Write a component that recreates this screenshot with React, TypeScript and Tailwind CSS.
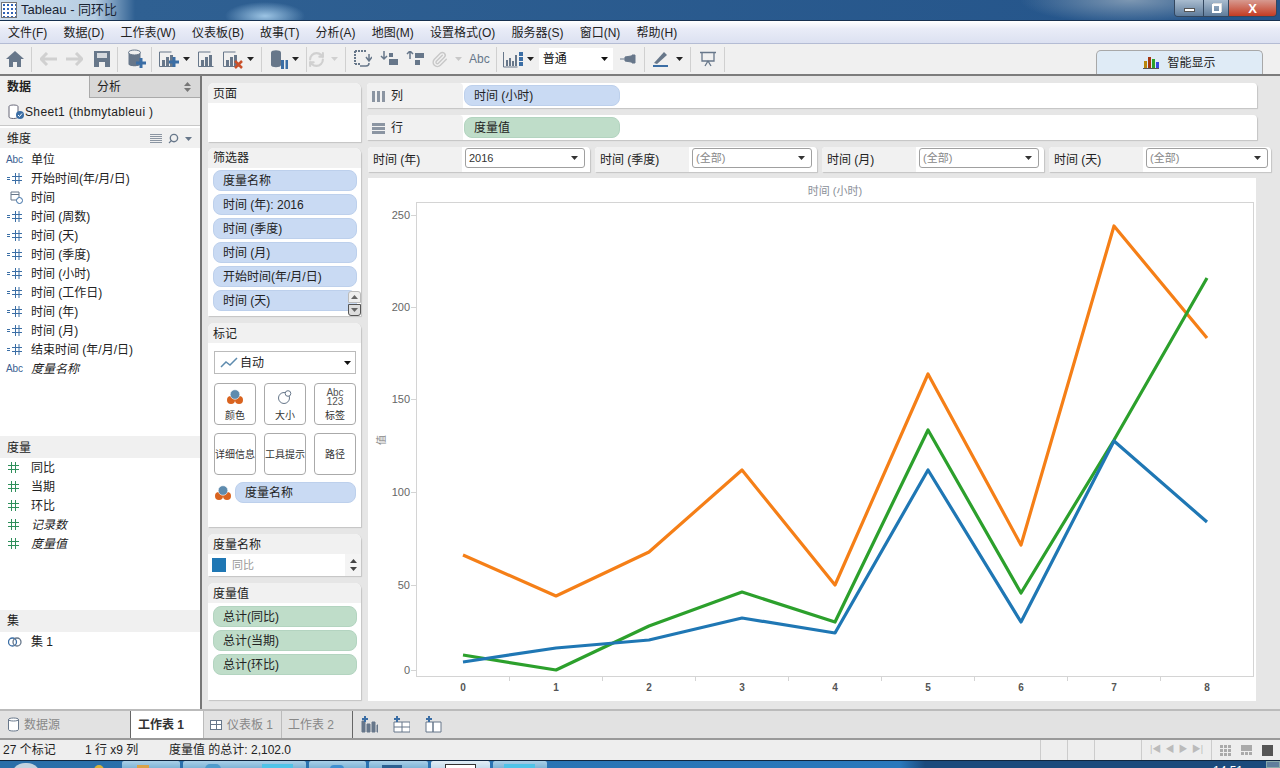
import React from "react";
import { Paperclip, RefreshCw, Search } from "lucide-react";

const font = "font-['Liberation_Sans','Noto_Sans_CJK_SC',sans-serif]";
const slate = "#67778a";
const accent = "#3b6ea5";

const Caret = ({ className = "" }: { className?: string }) => (
  <svg width="7" height="4" viewBox="0 0 7 4" className={`shrink-0 ${className}`}>
    <path d="M0 0h7L3.5 4z" fill="currentColor" />
  </svg>
);

const Sep = ({ ml }: { ml: string }) => <div className={`h-[25px] w-px shrink-0 bg-[#d0d0d0] ${ml}`} />;

// small bar chart used by the toolbar buttons, extra marks go on top
const Bars = ({ children }: { children?: React.ReactNode }) => (
  <svg width="20" height="20" viewBox="0 0 20 20" className="shrink-0">
    <path d="M.5 3v14.500h15M.5 3h12" fill="none" stroke={slate} />
    <path d="M3 11h3v6H3zM7 8h3v9H7zM11 6h3v11h-3z" fill={slate} />
    {children}
  </svg>
);

const HashIcon = () => (
  <svg width="15" height="11" viewBox="0 0 15 11" className="text-[#3b6ea5]">
    <path d="M0 4.500h3M0 6.500h3M5 3.500h10M5 7.500h10M8.500 0v11M12 0v11" stroke="currentColor" fill="none" />
  </svg>
);

const GreenHash = () => (
  <svg width="11" height="11" viewBox="0 0 11 11" className="-ml-[2px] text-[#2f8f5b]">
    <path d="M0 3.500h11M0 7.500h11M3.500 0v11M7.500 0v11" stroke="currentColor" fill="none" />
  </svg>
);

const AbcTag = () => <span className="text-[10px] leading-none text-[#3b5f92]">Abc</span>;

const ColorDots = () => (
  <svg width="16" height="16" viewBox="0 0 16 16">
    <circle cx="4" cy="11" r="4" fill="#d9631f" />
    <circle cx="12" cy="11" r="4" fill="#d9631f" />
    <circle cx="8" cy="5.500" r="4.800" fill="#5e8bae" stroke="#fff" strokeWidth=".6" />
  </svg>
);

const Row = ({ icon, label, italic }: { icon: React.ReactNode; label: string; italic?: boolean }) => (
  <div className="flex h-[19px] items-center text-[12px] text-[#222]">
    <div className="flex w-[31px] shrink-0 justify-center pr-[6px] pl-[4px]">{icon}</div>
    <span className={italic ? "italic" : ""}>{label}</span>
  </div>
);

const PanelHead = ({ label, className = "pt-px" }: { label: string; className?: string }) => (
  <div className={`flex h-[20px] items-center rounded-t-[6px] bg-[#f1f1f1] pl-[5px] text-[12px] text-[#222] ${className}`}>{label}</div>
);

const Pill = ({ label, green, className = "" }: { label: string; green?: boolean; className?: string }) => (
  <div
    className={`flex h-[21px] shrink-0 items-center rounded-[8px] border pl-[9px] text-[12px] text-[#222] ${
      green ? "border-[#b3d4c0] bg-[#bfddc9]" : "border-[#bdd0ec] bg-[#c9daf3]"
    } ${className}`}
  >
    {label}
  </div>
);

const Card = ({ className = "", children }: { className?: string; children: React.ReactNode }) => (
  <div className={`shrink-0 rounded-t-[6px] bg-white shadow-[1px_1px_1px_#c4c4c4] ${className}`}>{children}</div>
);

const MarkButton = ({ label, icon }: { label: string; icon?: React.ReactNode }) => (
  <div className="flex h-[42px] w-[42px] flex-col items-center justify-center rounded-[4px] border border-[#aaa] bg-white pt-[2px] text-[10px] leading-[12px] whitespace-nowrap text-[#333]">
    {icon && <div className="mb-[4px] flex h-[17px] items-center">{icon}</div>}
    {label}
  </div>
);

const Shelf = ({ label, pill, green, icon, mt }: { label: string; pill: string; green?: boolean; icon: React.ReactNode; mt: string }) => (
  <div className={`flex h-[25px] w-[890px] shrink-0 rounded-t-[4px] bg-white shadow-[1px_1px_1px_#c4c4c4] ${mt}`}>
    <div className="flex w-[96px] items-center gap-[6px] rounded-t-[4px] bg-[#f1f1f1] pt-px pl-[5px] text-[12px] text-[#222]">
      {icon}
      {label}
    </div>
    <Pill label={pill} green={green} className="mt-[2px] ml-[1px] w-[156px] pt-px" />
  </div>
);

const FilterCard = ({ label, value, muted, selectW }: { label: string; value: string; muted?: boolean; selectW: string }) => (
  <div className="flex h-[25px] w-[222px] shrink-0 rounded-t-[4px] bg-white shadow-[1px_1px_1px_#c4c4c4]">
    <div className="flex w-[94px] items-center rounded-tl-[4px] bg-[#f1f1f1] pl-[5px] text-[12px] text-[#222]">{label}</div>
    <div
      className={`mt-[1px] ml-[3px] flex h-[20px] items-center justify-between rounded-[3px] border border-[#a0a0a0] pr-[6px] pl-[3px] text-[11px] ${selectW} ${
        muted ? "text-[#888]" : "text-[#333]"
      }`}
    >
      {value}
      <Caret className="text-[#333]" />
    </div>
  </div>
);

const blue = "463,662 556,648 649,640 742,618 835,633 928,470 1021,622 1114,441 1207,522";
const orange = "463,555 556,596 649,552 742,470 835,585 928,374 1021,545 1114,226 1207,338";
const green = "463,655 556,670 649,626 742,592 835,622 928,430 1021,593 1114,440 1207,278";

const Chart = () => (
  <svg width="888" height="523" viewBox="368 178 888 523" className="block">
    <rect x="416.500" y="202.500" width="837" height="474" fill="none" stroke="#d4d4d4" />
    {[
      [215, "250"],
      [307, "200"],
      [399, "150"],
      [492, "100"],
      [585, "50"],
      [670, "0"],
    ].map(([y, t]) => (
      <g key={t}>
        <path d={`M411 ${y}.5h5`} stroke="#d4d4d4" />
        <text x="410" y={Number(y) + 4} textAnchor="end" fontSize="11" fill="#666" fontFamily="Liberation Sans">
          {t}
        </text>
      </g>
    ))}
    {[509, 602, 695, 788, 881, 974, 1067, 1160].map((x) => (
      <path key={x} d={`M${x}.5 676v5`} stroke="#d4d4d4" />
    ))}
    {[463, 556, 649, 742, 835, 928, 1021, 1114, 1207].map((x, i) => (
      <text key={x} x={x} y="691" textAnchor="middle" fontSize="10" fontWeight="bold" fill="#555" fontFamily="Liberation Sans">
        {i}
      </text>
    ))}
    <text x="835" y="195" textAnchor="middle" fontSize="11" fill="#8a8f99" fontFamily="Liberation Sans, Noto Sans CJK SC">
      时间 (小时)
    </text>
    <text transform="translate(385 440) rotate(-90)" textAnchor="middle" fontSize="10" fill="#888" fontFamily="Noto Sans CJK SC">
      值
    </text>
    <polyline points={orange} fill="none" stroke="#f57f17" strokeWidth="3.200" strokeLinejoin="round" />
    <polyline points={green} fill="none" stroke="#2ca02c" strokeWidth="3.200" strokeLinejoin="round" />
    <polyline points={blue} fill="none" stroke="#1f77b4" strokeWidth="3.200" strokeLinejoin="round" />
  </svg>
);

const menus = ["文件(F)", "数据(D)", "工作表(W)", "仪表板(B)", "故事(T)", "分析(A)", "地图(M)", "设置格式(O)", "服务器(S)", "窗口(N)", "帮助(H)"];
const dims = ["开始时间(年/月/日)", "时间", "时间 (周数)", "时间 (天)", "时间 (季度)", "时间 (小时)", "时间 (工作日)", "时间 (年)", "时间 (月)", "结束时间 (年/月/日)"];

export default function App() {
  return (
    <div className={`flex h-[768px] w-[1280px] flex-col overflow-hidden bg-[#e6e6e6] ${font}`}>
      {/* title bar */}
      <div className="flex h-[21px] shrink-0 items-start justify-between border-b border-[#16304f] bg-[radial-gradient(ellipse_40px_14px_at_265px_16px,#9cc4e4,transparent),radial-gradient(ellipse_110px_24px_at_1130px_0,#7d97b2,transparent),linear-gradient(90deg,#cfdeec_0,#b6cde2_95px,#2f6092_135px,#24548a_100%)]">
        <div className="flex items-center gap-[4px] pt-[1px] pl-[1px] text-[13px] leading-[18px] text-[#1a2433]">
          <div className="h-[16px] w-[16px] border border-[#777] bg-white bg-[radial-gradient(#2f62b5_1px,transparent_1.5px)] bg-[length:4px_4px]" />
          Tableau - 同环比
        </div>
        <div className="mr-[3px] flex h-[17px] overflow-hidden rounded-b-[4px] border border-t-0 border-[#33475f] text-white">
          <div className="flex w-[28px] items-end justify-center bg-[linear-gradient(#a9bccf,#5f7c9b)] pb-[4px]">
            <div className="h-[4px] w-[11px] border border-[#555] bg-white" />
          </div>
          <div className="flex w-[26px] items-center justify-center border-x border-[#33475f] bg-[linear-gradient(#a9bccf,#5f7c9b)]">
            <div className="h-[9px] w-[9px] border-2 border-white shadow-[1px_-1px_0_#ddd]" />
          </div>
          <div className="flex w-[47px] items-center justify-center bg-[linear-gradient(#d79a90,#c43b22)] text-[13px] leading-none font-bold">X</div>
        </div>
      </div>

      {/* menu */}
      <div className="flex h-[23px] shrink-0 items-center gap-[16.2px] border-b border-[#b4bcd4] bg-[linear-gradient(#ffffff_0,#e9ecf7_35%,#dce1f1_100%)] pt-px pl-[8px] text-[12px] text-[#222]">
        {menus.map((m) => (
          <span key={m}>{m}</span>
        ))}
      </div>

      {/* toolbar */}
      <div className="relative flex h-[32px] shrink-0 items-center border-b-2 border-[#7c7c7c] bg-[#f0f0f0] text-[#67778a]">
        <svg width="18" height="16" viewBox="0 0 18 16" className="ml-[6px] shrink-0">
          <path d="M9 0 0 8h3v8h4v-5h4v5h4V8h3z" fill={slate} />
        </svg>
        <Sep ml="ml-[7px]" />
        <svg width="17" height="14" viewBox="0 0 17 14" className="ml-[8px] shrink-0">
          <path d="M7 1 1 7l6 6M2 7h15" fill="none" stroke="#d0d0d0" strokeWidth="3" />
        </svg>
        <svg width="17" height="14" viewBox="0 0 17 14" className="ml-[9px] shrink-0">
          <path d="m10 1 6 6-6 6M15 7H0" fill="none" stroke="#d0d0d0" strokeWidth="3" />
        </svg>
        <svg width="16" height="16" viewBox="0 0 16 16" className="ml-[11px] shrink-0">
          <path d="M0 0h16v16H0z" fill={slate} />
          <path d="M3 2h10v5H3z" fill="#d5d9de" />
          <path d="M5 11h6v5H5z" fill="#f0f0f0" />
        </svg>
        <Sep ml="ml-[7px]" />
        <svg width="18" height="20" viewBox="0 0 18 20" className="ml-[10px] shrink-0">
          <path d="M.5 3.500V15c0 3 12 3 12 0V3.500z" fill={slate} />
          <ellipse cx="6.500" cy="3.500" rx="6" ry="2.500" fill="#f0f0f0" stroke={slate} />
          <path d="M8 14h10M13 9v10" stroke={accent} strokeWidth="3" />
        </svg>
        <Sep ml="ml-[5px]" />
        <div className="ml-[7px]">
          <Bars>
            <path d="M10 13h10M15 8v10" stroke={accent} strokeWidth="3" />
          </Bars>
        </div>
        <Caret className="ml-[4px] text-[#222]" />
        <div className="ml-[8px]">
          <Bars />
        </div>
        <div className="ml-[5px]">
          <Bars>
            <path d="m12 12 7 7m0-7-7 7" stroke="#c9502a" strokeWidth="2.500" />
          </Bars>
        </div>
        <Caret className="ml-[4px] text-[#222]" />
        <Sep ml="ml-[7px]" />
        <svg width="18" height="20" viewBox="0 0 18 20" className="ml-[8px] shrink-0">
          <path d="M1 3.500V16c0 3 10 3 10 0V3.500c0-3-10-3-10 0z" fill={slate} />
          <path d="M11 11h3v9h-3zM15.500 11h2.500v9h-2.500z" fill={accent} />
        </svg>
        <Caret className="ml-[4px] text-[#222]" />
        <Sep ml="ml-[7px]" />
        <RefreshCw size={17} strokeWidth={3} className="ml-[1px] shrink-0 text-[#d0d0d0]" />
        <Caret className="ml-[6px] text-[#d0d0d0]" />
        <Sep ml="ml-[7px]" />
        <svg width="18" height="18" viewBox="0 0 18 18" className="ml-[8px] shrink-0">
          <path d="M1 1h12M1 1v13M1 14h6" fill="none" stroke={slate} strokeWidth="2" strokeDasharray="2 1" />
          <path d="M15 4v6M12 7l3 4 3-4M6 16h6c2 0 3-1 3-3" fill="none" stroke={slate} strokeWidth="1.500" />
        </svg>
        <svg width="18" height="16" viewBox="0 0 18 16" className="ml-[8px] shrink-0">
          <path d="M4 0v8M1 5l3 3 3-3" fill="none" stroke={slate} strokeWidth="1.500" />
          <path d="M9 2h4v4H9zM9 8h9v6H9z" fill={slate} />
        </svg>
        <svg width="18" height="16" viewBox="0 0 18 16" className="ml-[8px] shrink-0">
          <path d="M4 8V0M1 3l3-3 3 3" fill="none" stroke={slate} strokeWidth="1.500" />
          <path d="M9 2h9v5H9zM9 9h5v5H9z" fill={slate} />
        </svg>
        <Paperclip size={17} className="ml-[7px] shrink-0 text-[#c8c8c8]" />
        <Caret className="ml-[7px] text-[#c8c8c8]" />
        <span className="ml-[7px] text-[12px]">Abc</span>
        <Sep ml="ml-[6px]" />
        <svg width="20" height="17" viewBox="0 0 20 17" className="ml-[6px] shrink-0">
          <path d="M.5 1v15h14" fill="none" stroke={slate} />
          <path d="M3 9h2v6H3zM6 7h2v8H6zM9 10h2v5H9zM12 4h2v11h-2z" fill={slate} />
          <path d="M16 1h4v4h-4zM16 6h4v4h-4zM16 11h4v4h-4z" fill={accent} />
        </svg>
        <Caret className="ml-[4px] text-[#222]" />
        <div className="ml-[5px] flex h-[22px] w-[74px] shrink-0 items-center justify-between bg-white pr-[5px] pl-[4px] text-[12px] text-[#111]">
          普通
          <Caret className="text-[#111]" />
        </div>
        <svg width="16" height="10" viewBox="0 0 16 10" className="ml-[7px] shrink-0">
          <path d="M0 5h5M5 3l6-1h1V1h3v8h-3V8h-1L5 7z" fill={slate} stroke={slate} />
        </svg>
        <Sep ml="ml-[8px]" />
        <svg width="16" height="16" viewBox="0 0 16 16" className="ml-[8px] shrink-0">
          <path d="M1 12 11 1l3 3L4 13z" fill={slate} />
          <path d="M0 15h15" stroke={accent} strokeWidth="2" />
        </svg>
        <Caret className="ml-[7px] text-[#222]" />
        <Sep ml="ml-[7px]" />
        <svg width="16" height="16" viewBox="0 0 16 16" className="ml-[9px] shrink-0">
          <path d="M0 1.500h16M2 2v8h12V2M5 15l3-5 3 5" fill="none" stroke={slate} strokeWidth="1.300" />
        </svg>
        <Sep ml="ml-[8px]" />
        <div className="absolute right-[17px] bottom-0 flex h-[24px] w-[167px] items-center justify-center gap-[8px] rounded-t-[5px] border border-b-0 border-[#a8a8a8] bg-[#dfebf6] text-[12px] text-[#222]">
          <svg width="16" height="13" viewBox="0 0 16 13">
            <path d="M1 5h3v7H1z" fill="#b8860b" />
            <path d="M5 1h3v11H5z" fill="#a5370f" />
            <path d="M9 3h3v9H9z" fill="#2ca02c" />
            <path d="M13 6h3v6h-3z" fill="#3b48e0" />
            <path d="M0 12.500h16" stroke="#555" />
          </svg>
          智能显示
        </div>
      </div>

      {/* main area */}
      <div className="flex h-[633px] shrink-0">
        {/* data pane */}
        <div className="flex w-[202px] shrink-0 flex-col border-r-2 border-[#777] bg-white">
          <div className="flex h-[22px] shrink-0 text-[12px] text-[#222]">
            <div className="flex w-[89px] items-center bg-[#f0f0f0] pl-[7px] font-bold">数据</div>
            <div className="flex flex-1 items-center justify-between border-b border-l border-[#aaa] bg-[#d8d8d8] pr-[9px] pl-[7px]">
              分析
              <div className="flex flex-col gap-[2px] text-[#777]">
                <Caret className="rotate-180" />
                <Caret />
              </div>
            </div>
          </div>
          <div className="flex h-[28px] shrink-0 items-center gap-px border-b border-[#c8c8c8] bg-[#f0f0f0] pl-[8px] text-[12px] tracking-[0.35px] text-[#222]">
            <svg width="16" height="16" viewBox="0 0 16 16">
              <path d="M1 2.500V13c0 2 9 2 9 0V2.500c0-2-9-2-9 0z" fill="#fff" stroke="#667" />
              <circle cx="12" cy="11" r="4" fill={accent} />
              <path d="m10 11 1.500 1.500 2.500-3" fill="none" stroke="#fff" />
            </svg>
            Sheet1 (thbmytableui )
          </div>
          <div className="mt-[2px] flex h-[20px] shrink-0 items-center justify-between bg-[#f0f0f0] pt-px pr-[8px] pl-[7px] text-[12px] text-[#222]">
            维度
            <div className="flex items-center gap-[6px] text-[#67778a]">
              <div className="h-[10px] w-[12px] bg-[repeating-linear-gradient(#8b95a2_0_1px,#f0f0f0_1px_2px)]" />
              <Search size={11} strokeWidth={3} className="-scale-x-100" />
              <Caret />
            </div>
          </div>
          <div className="shrink-0 pt-[2px]">
            <Row icon={<AbcTag />} label="单位" />
            {dims.map((d) =>
              d === "时间" ? (
                <Row
                  key={d}
                  label={d}
                  icon={
                    <svg width="13" height="13" viewBox="0 0 13 13" className="ml-[3px]">
                      <path d="M1 1h8v8H1zM1 3.500h8" fill="none" stroke={slate} />
                      <circle cx="9.500" cy="9.500" r="3" fill="#fff" stroke={accent} />
                    </svg>
                  }
                />
              ) : (
                <Row key={d} label={d} icon={<HashIcon />} />
              ),
            )}
            <Row icon={<AbcTag />} label="度量名称" italic />
          </div>
          <div className="mt-[58px] flex h-[22px] shrink-0 items-center bg-[#f0f0f0] pt-px pl-[7px] text-[12px] text-[#222]">度量</div>
          <div className="shrink-0">
            <Row icon={<GreenHash />} label="同比" />
            <Row icon={<GreenHash />} label="当期" />
            <Row icon={<GreenHash />} label="环比" />
            <Row icon={<GreenHash />} label="记录数" italic />
            <Row icon={<GreenHash />} label="度量值" italic />
          </div>
          <div className="mt-[57px] flex h-[22px] shrink-0 items-center bg-[#f0f0f0] pl-[7px] text-[12px] text-[#222]">集</div>
          <div className="shrink-0">
            <Row
              label="集 1"
              icon={
                <svg width="14" height="12" viewBox="0 0 14 12">
                  <circle cx="4.500" cy="6" r="4" fill="none" stroke={accent} strokeWidth="1.300" />
                  <circle cx="9" cy="6" r="4" fill="none" stroke={slate} strokeWidth="1.300" />
                </svg>
              }
            />
          </div>
        </div>

        {/* cards column */}
        <div className="ml-[6px] flex w-[153px] shrink-0 flex-col pt-[7px]">
          <Card className="h-[59px]">
            <PanelHead label="页面" />
          </Card>
          <Card className="relative mt-[6px] h-[168px]">
            <PanelHead label="筛选器" className="" />
            <div className="flex flex-col gap-[3px] pt-[2px] pl-[5px]">
              {["度量名称", "时间 (年): 2016", "时间 (季度)", "时间 (月)", "开始时间(年/月/日)", "时间 (天)"].map((f) => (
                <Pill key={f} label={f} className="w-[144px]" />
              ))}
            </div>
            <div className="absolute right-0 bottom-0 flex h-[25px] w-[13px] flex-col gap-[1px] text-[#666]">
              <div className="flex h-[12px] items-center justify-center rounded-t-[3px] border border-[#bbb] bg-[#eee]">
                <Caret className="rotate-180" />
              </div>
              <div className="flex h-[12px] items-center justify-center rounded-b-[3px] border border-[#555] bg-[#ddd]">
                <Caret />
              </div>
            </div>
          </Card>
          <Card className="mt-[7px] h-[204px]">
            <PanelHead label="标记" />
            <div className="mt-[8px] mr-[5px] ml-[6px] flex h-[23px] items-center justify-between border border-[#bbb] pr-[4px] pl-[5px] text-[12px] text-[#222]">
              <span className="flex items-center gap-[2px]">
                <svg width="18" height="12" viewBox="0 0 18 12">
                  <path d="M1 10 6 5l4 3 7-7" fill="none" stroke="#5e8bae" strokeWidth="1.500" />
                </svg>
                自动
              </span>
              <Caret className="text-[#111]" />
            </div>
            <div className="mt-[9px] ml-[6px] grid grid-cols-[42px_42px_42px] gap-x-[8px] gap-y-[8px]">
              <MarkButton label="颜色" icon={<ColorDots />} />
              <MarkButton
                label="大小"
                icon={
                  <svg width="14" height="14" viewBox="0 0 14 14">
                    <circle cx="6" cy="8" r="5.500" fill="none" stroke={slate} />
                    <circle cx="10" cy="3.500" r="2.800" fill="#fff" stroke={slate} />
                  </svg>
                }
              />
              <MarkButton
                label="标签"
                icon={
                  <span className="text-center text-[10px] leading-[9px] text-[#555]">
                    Abc
                    <br />
                    123
                  </span>
                }
              />
              <MarkButton label="详细信息" />
              <MarkButton label="工具提示" />
              <MarkButton label="路径" />
            </div>
            <div className="mt-[7px] flex items-center gap-[4px] pl-[7px]">
              <ColorDots />
              <Pill label="度量名称" className="w-[121px]" />
            </div>
          </Card>
          <Card className="mt-[7px] h-[42px]">
            <PanelHead label="度量名称" />
            <div className="flex h-[22px] items-center pl-[4px] text-[11px] text-[#999]">
              <div className="mr-[6px] h-[14px] w-[14px] bg-[#1f77b4]" />
              同比
              <div className="ml-auto flex h-[22px] w-[16px] flex-col items-center justify-center gap-[4px] bg-[#f4f4f4] text-[#444]">
                <Caret className="rotate-180" />
                <Caret />
              </div>
            </div>
          </Card>
          <Card className="mt-[7px] h-[117px]">
            <PanelHead label="度量值" />
            <div className="flex flex-col gap-[3px] pt-[3px] pl-[5px]">
              {["总计(同比)", "总计(当期)", "总计(环比)"].map((f) => (
                <Pill key={f} green label={f} className="w-[144px]" />
              ))}
            </div>
          </Card>
        </div>

        {/* view */}
        <div className="ml-[6px] flex min-w-0 flex-1 flex-col overflow-hidden pt-[7px]">
          <Shelf
            label="列"
            pill="时间 (小时)"
            mt=""
            icon={<div className="h-[11px] w-[13px] bg-[repeating-linear-gradient(90deg,#8b95a2_0_3px,#f1f1f1_3px_5px)]" />}
          />
          <Shelf
            label="行"
            pill="度量值"
            green
            mt="mt-[7px]"
            icon={<div className="h-[11px] w-[13px] bg-[repeating-linear-gradient(#8b95a2_0_3px,#f1f1f1_3px_4px)]" />}
          />
          <div className="mt-[7px] ml-[1px] flex shrink-0 gap-[5px]">
            <FilterCard label="时间 (年)" value="2016" selectW="w-[120px]" />
            <FilterCard label="时间 (季度)" value="(全部)" muted selectW="w-[120px]" />
            <FilterCard label="时间 (月)" value="(全部)" muted selectW="w-[120px]" />
            <FilterCard label="时间 (天)" value="(全部)" muted selectW="w-[122px]" />
          </div>
          <div className="mt-[6px] ml-[1px] w-[888px] shrink-0 bg-white">
            <Chart />
          </div>
        </div>
      </div>

      {/* sheet tabs */}
      <div className="flex h-[31px] shrink-0 border-y-2 border-t-[#bbb] border-b-[#999] bg-[#e2e2e2] text-[12px] text-[#888]">
        <div className="flex w-[131px] items-center gap-[5px] border-r border-[#666] pl-[8px]">
          <svg width="11" height="15" viewBox="0 0 11 15">
            <path d="M.5 2.500V12.500c0 2 10 2 10 0V2.500c0-2-10-2-10 0zM.5 2.500c0 2 10 2 10 0" fill="#fff" stroke={slate} />
          </svg>
          数据源
        </div>
        <div className="flex w-[72px] items-center bg-white pl-[7px] font-bold text-[#333]">工作表 1</div>
        <div className="flex w-[79px] items-center gap-[5px] border-x border-[#bbb] pl-[6px]">
          <div className="grid h-[10px] w-[12px] grid-cols-2 gap-px border border-[#67778a] bg-[#67778a]">
            <div className="bg-white" />
            <div className="bg-white" />
            <div className="bg-white" />
            <div className="bg-white" />
          </div>
          仪表板 1
        </div>
        <div className="flex w-[71px] items-center border-r border-[#666] pl-[6px]">工作表 2</div>
        <div className="flex items-center gap-[15px] pl-[8px]">
          {["M1 5h3v11H1zM6 8h3v8H6zM11 6h3v10h-3zM16 9h1v7h-1z", "M1 6h16v10H1zM9 6v10M1 11h16", "M1 6h7v10H1zM8 6h8v10H8z"].map((d, i) => (
            <svg key={d} width="17" height="17" viewBox="0 0 17 17">
              <path d={d} fill={i === 0 ? slate : "#fff"} stroke={slate} />
              <path d="M1 3h6M4 0v6" stroke={accent} strokeWidth="2" />
            </svg>
          ))}
        </div>
      </div>

      {/* status bar */}
      <div className="flex h-[20px] shrink-0 items-center bg-[#eeeeee] pl-[3px] text-[12px] text-[#222]">
        <span className="w-[82px]">27 个标记</span>
        <span className="w-[84px]">1 行 x9 列</span>
        <span>度量值 的总计: 2,102.0</span>
        <div className="ml-auto flex h-full items-center text-[#bbb]">
          <div className="h-full w-[27px] border-l border-[#ccc]" />
          <div className="h-full w-[27px] border-l border-[#ccc]" />
          <div className="h-full w-[47px] border-l border-[#ccc]" />
          <div className="flex h-full w-[71px] items-center justify-between border-x border-[#ccc] px-[8px] text-[9px]">
            <span>|◀</span>
            <span>◀</span>
            <span>▶</span>
            <span>▶|</span>
          </div>
          <div className="flex w-[68px] items-center gap-[10px] pr-[5px] pl-[8px]">
            <div className="grid h-[11px] w-[11px] grid-cols-3 grid-rows-3 gap-px">
              {[0, 1, 2, 3, 4, 5, 6, 7, 8].map((i) => (
                <div key={i} className="bg-[#aaa]" />
              ))}
            </div>
            <div className="grid h-[11px] w-[11px] grid-cols-3 grid-rows-[2fr_1fr] gap-px">
              <div className="col-span-3 bg-[#aaa]" />
              <div className="bg-[#aaa]" />
              <div className="bg-[#aaa]" />
              <div className="bg-[#aaa]" />
            </div>
            <div className="h-[11px] w-[11px] bg-[#555]" />
          </div>
        </div>
      </div>

      {/* taskbar */}
      <div className="flex h-[8px] shrink-0 overflow-hidden border-t border-[#10263f] bg-[linear-gradient(90deg,#2a6ea8_0,#2a78bc_900px,#1b4a7c_925px,#1b4a7c_100%)]">
        <div className="mt-[2px] ml-[11px] h-[14px] w-[30px] shrink-0 rounded-t-full bg-[#c3d2de]" />
        <div className="mt-[4px] ml-[53px] h-[10px] w-[10px] shrink-0 rounded-t-full bg-[#d8b23a]" />
        <div className="ml-[18px] flex shrink-0 gap-[3px]">
          <div className="flex h-full w-[58px] rounded-t-[2px] bg-[linear-gradient(#a9d0e8,#7fb4d6)] pt-[4px] pl-[15px]">
            <div className="h-[4px] w-[12px] bg-[#d9a24a]" />
          </div>
          <div className="flex h-full w-[123px] rounded-t-[2px] bg-[linear-gradient(#a9d0e8,#7fb4d6)] pt-[3px] pl-[22px]">
            <div className="h-[5px] w-[16px] rounded-t-full bg-[#4f9ccc]" />
            <div className="ml-[41px] h-[5px] w-[31px] bg-[#4fc3e8]" />
          </div>
          <div className="flex h-full w-[57px] rounded-t-[2px] bg-[linear-gradient(#a9d0e8,#7fb4d6)] pt-[4px] pl-[21px]">
            <div className="h-[4px] w-[14px] rounded-t-full bg-[#3f8fd0]" />
          </div>
          <div className="flex h-full w-[59px] rounded-t-[2px] bg-[linear-gradient(#a9d0e8,#7fb4d6)] pt-[4px] pl-[13px]">
            <div className="h-[4px] w-[20px] bg-[#2b5f90]" />
          </div>
          <div className="flex h-full w-[59px] rounded-t-[2px] bg-[linear-gradient(#e2eef6,#c5dcec)] pt-[3px] pl-[14px]">
            <div className="h-[5px] w-[31px] border border-[#333] bg-white" />
          </div>
          <div className="flex h-full w-[54px] rounded-t-[2px] bg-[linear-gradient(#a9d0e8,#7fb4d6)] pt-[3px] pl-[11px]">
            <div className="h-[5px] w-[31px] bg-[#4fc3e8]" />
          </div>
        </div>
        <span className="mt-[3px] ml-[666px] shrink-0 text-[12px] leading-[14px] text-white">14:51</span>
        <div className="ml-auto h-full w-[14px] shrink-0 border border-[#8aa] bg-[#5f7e9c]" />
      </div>
    </div>
  );
}
